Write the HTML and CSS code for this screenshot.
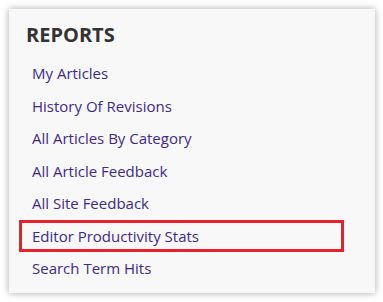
FILE: index.html
```html
<!DOCTYPE html>
<html lang="en">

<head>
  <meta charset="UTF-8">
  <meta name="viewport" content="width=device-width, initial-scale=1.0">
  <title>Reports</title>
  <link rel="stylesheet" href="styles.css">
</head>

<body>
  <div class="reports">
    <h1>REPORTS</h1>
    <ul>
      <li><a href="#">My Articles</a></li>
      <li><a href="#">History Of Revisions</a></li>
      <li><a href="#">All Articles By Category</a></li>
      <li><a href="#">All Article Feedback</a></li>
      <li><a href="#">All Site Feedback</a></li>
      <li class="marcado"><a href="#">Editor Productivity Stats</a></li>
      <li><a href="#">Search Term Hits</a></li>
    </ul>
  </div>
</body>

</html>
```

FILE: styles.css
```css
body {
  margin: 0;
  padding: 9px;
  font-family: "Open Sans", Arial, sans-serif;
  background-color: #fff;
}

.reports {
  width: 366px;
  height: 284px;
  box-sizing: border-box;
  background-color: #f8f8f8;
  box-shadow: 0 0 7px rgba(0, 0, 0, 0.35);
  padding: 14px 31px 0 10px;
}

h1 {
  margin: 0 0 10px 7px;
  font-size: 20px;
  line-height: 24px;
  font-weight: bold;
  color: #333;
}

ul {
  list-style: none;
  margin: 0;
  padding: 0;
}

li {
  border: 3px solid transparent;
  padding: 0 10px;
  font-size: 15px;
  line-height: 26.5px;
}

li.marcado {
  border-color: #e8202c;
}

li a {
  color: #3e2a88;
  text-decoration: none;
}
```
